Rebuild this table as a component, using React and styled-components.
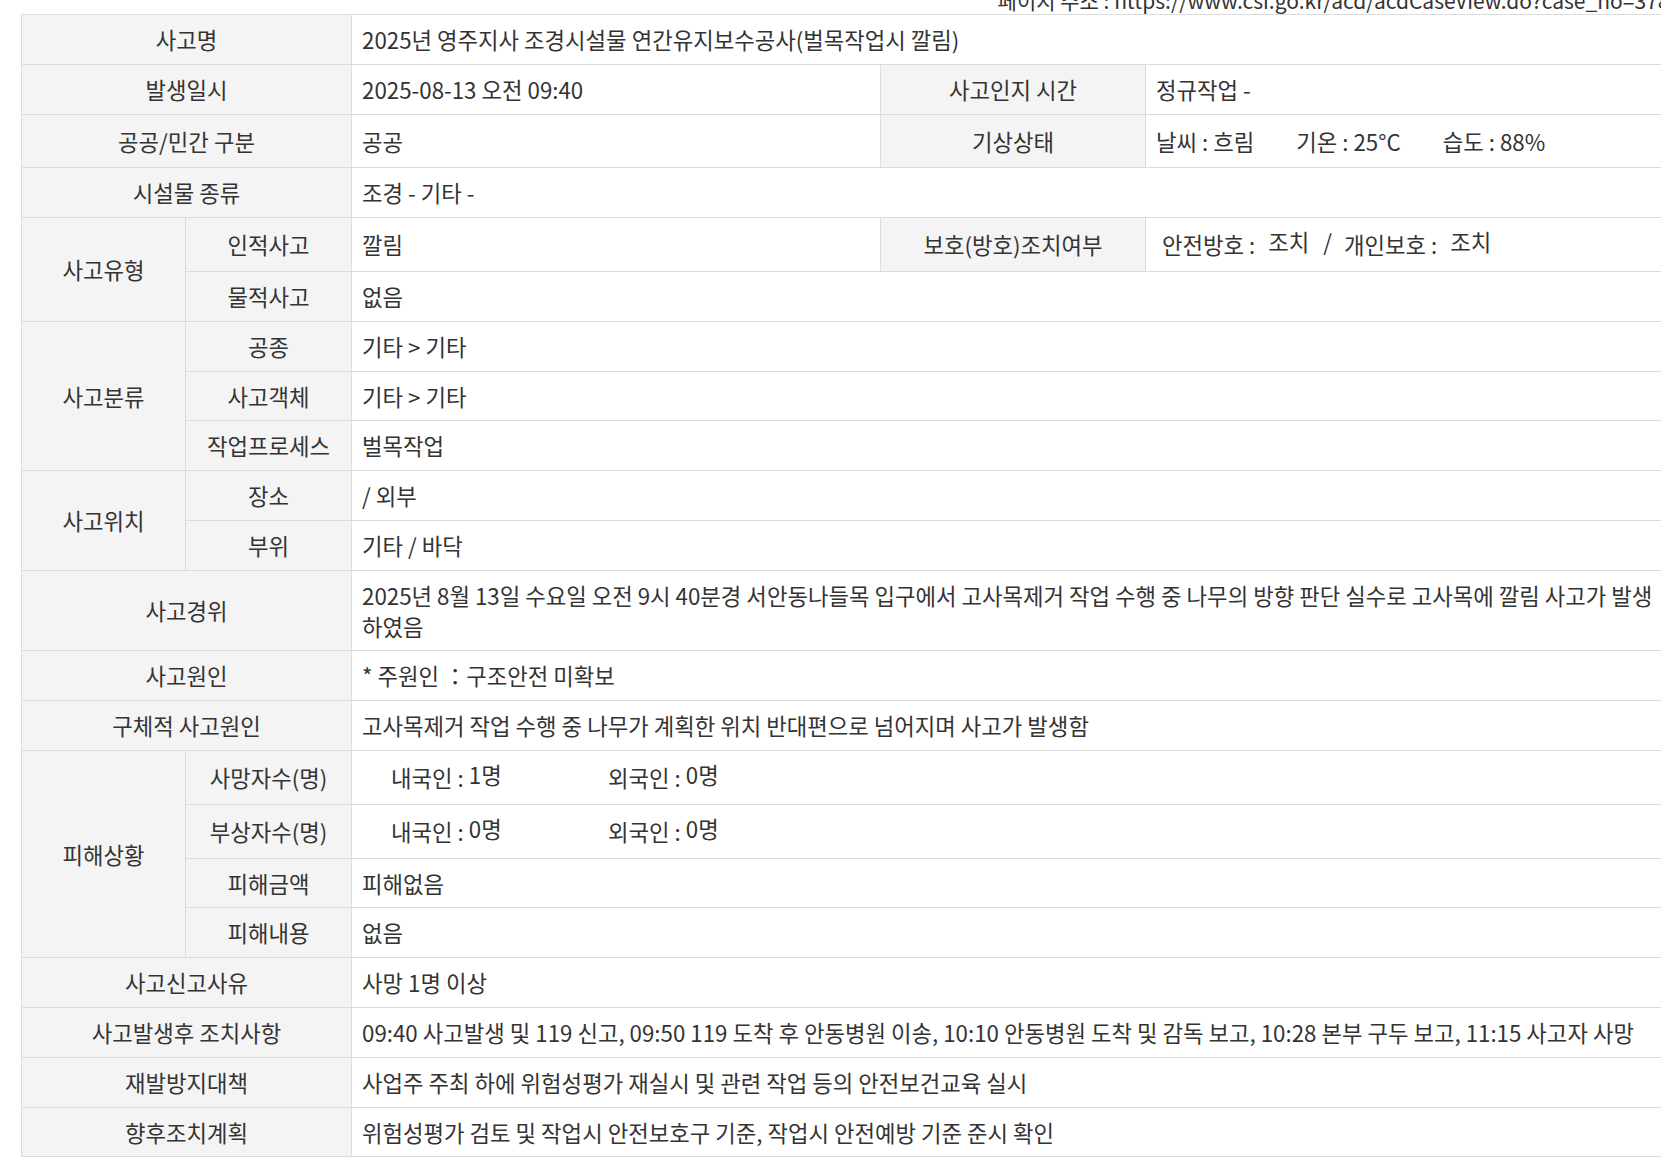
import React from 'react';
import styled, { createGlobalStyle } from 'styled-components';

const GlobalStyle = createGlobalStyle`
  html, body {
    margin: 0;
    padding: 0;
    background: #fff;
    overflow: hidden;
  }
  body {
    font-family: "Noto Sans CJK KR", "Noto Sans", sans-serif;
    color: #333;
  }
`;

const Page = styled.div`
  padding-left: 21px;
  width: 1650px;
`;

const AddressBar = styled.div`
  height: 14px;
  overflow: hidden;
  display: flex;
  justify-content: flex-end;
  align-items: flex-end;
`;

const Address = styled.div`
  font-size: 21px;
  line-height: 20px;
  margin-bottom: 4px;
  margin-right: -10px;
  white-space: nowrap;
`;

const Table = styled.table`
  width: 1650px;
  table-layout: fixed;
  border-collapse: collapse;
  font-size: 22.3px;
  line-height: 30.8px;
`;

const Th = styled.th`
  background: #f4f4f4;
  border: 1px solid #dcdcdc;
  font-weight: 400;
  text-align: center;
  padding: ${(p) => (p.$tall ? '11px' : '9px')} 10px;
  white-space: nowrap;
`;

const Td = styled.td`
  border: 1px solid #dcdcdc;
  padding: ${(p) => (p.$tall ? '11px' : '9px')} 10px;
  text-align: left;
  vertical-align: middle;
`;

const Weather = styled.div`
  display: flex;
  gap: 42px;
`;

const Guard = styled.div`
  display: flex;
  align-items: center;
  padding-left: 6px;
`;

const Raised = styled.span`
  position: relative;
  top: -3px;
  margin-left: ${(p) => p.$gap || 0}px;
`;

const Slash = styled.span`
  position: relative;
  top: -3px;
  margin: 0 12px 0 14px;
`;

const Count = styled.div`
  display: flex;
  padding-left: 29px;
`;

const CountItem = styled.span`
  width: 217px;
`;

const People = ({ local, foreign }) => (
  <Count>
    <CountItem>
      내국인 : <Raised>{local}명</Raised>
    </CountItem>
    <CountItem>
      외국인 : <Raised>{foreign}명</Raised>
    </CountItem>
  </Count>
);

const simpleRows = [
  ['사고신고사유', '사망 1명 이상'],
  [
    '사고발생후 조치사항',
    '09:40 사고발생 및 119 신고, 09:50 119 도착 후 안동병원 이송, 10:10 안동병원 도착 및 감독 보고, 10:28 본부 구두 보고, 11:15 사고자 사망',
  ],
  ['재발방지대책', '사업주 주최 하에 위험성평가 재실시 및 관련 작업 등의 안전보건교육 실시'],
  ['향후조치계획', '위험성평가 검토 및 작업시 안전보호구 기준, 작업시 안전예방 기준 준시 확인'],
];

const App = () => {
  return (
    <Page>
      <GlobalStyle />
      <AddressBar>
        <Address>페이지 주소 : https://www.csi.go.kr/acd/acdCaseView.do?case_no=3789</Address>
      </AddressBar>
      <Table>
        <colgroup>
          <col style={{ width: 164 }} />
          <col style={{ width: 166 }} />
          <col style={{ width: 529 }} />
          <col style={{ width: 265 }} />
          <col />
        </colgroup>
        <tbody>
          <tr>
            <Th colSpan={2}>사고명</Th>
            <Td colSpan={3}>2025년 영주지사 조경시설물 연간유지보수공사(벌목작업시 깔림)</Td>
          </tr>
          <tr>
            <Th colSpan={2}>발생일시</Th>
            <Td>2025-08-13 오전 09:40</Td>
            <Th>사고인지 시간</Th>
            <Td>정규작업 -</Td>
          </tr>
          <tr>
            <Th colSpan={2} $tall>
              공공/민간 구분
            </Th>
            <Td $tall>공공</Td>
            <Th $tall>기상상태</Th>
            <Td $tall>
              <Weather>
                <span>날씨 : 흐림</span>
                <span>기온 : 25°C</span>
                <span>습도 : 88%</span>
              </Weather>
            </Td>
          </tr>
          <tr>
            <Th colSpan={2}>시설물 종류</Th>
            <Td colSpan={3}>조경 - 기타 -</Td>
          </tr>
          <tr>
            <Th rowSpan={2}>사고유형</Th>
            <Th $tall>인적사고</Th>
            <Td $tall>깔림</Td>
            <Th $tall>보호(방호)조치여부</Th>
            <Td $tall>
              <Guard>
                <span>안전방호 :</span>
                <Raised $gap={13}>조치</Raised>
                <Slash>/</Slash>
                <span>개인보호 :</span>
                <Raised $gap={13}>조치</Raised>
              </Guard>
            </Td>
          </tr>
          <tr>
            <Th>물적사고</Th>
            <Td colSpan={3}>없음</Td>
          </tr>
          <tr>
            <Th rowSpan={3}>사고분류</Th>
            <Th>공종</Th>
            <Td colSpan={3}>기타 &gt; 기타</Td>
          </tr>
          <tr>
            <Th>사고객체</Th>
            <Td colSpan={3}>기타 &gt; 기타</Td>
          </tr>
          <tr>
            <Th>작업프로세스</Th>
            <Td colSpan={3}>벌목작업</Td>
          </tr>
          <tr>
            <Th rowSpan={2}>사고위치</Th>
            <Th>장소</Th>
            <Td colSpan={3}>/ 외부</Td>
          </tr>
          <tr>
            <Th>부위</Th>
            <Td colSpan={3}>기타 / 바닥</Td>
          </tr>
          <tr>
            <Th colSpan={2}>사고경위</Th>
            <Td colSpan={3}>
              2025년 8월 13일 수요일 오전 9시 40분경 서안동나들목 입구에서 고사목제거 작업 수행 중 나무의 방향
              판단 실수로 고사목에 깔림 사고가 발생하였음
            </Td>
          </tr>
          <tr>
            <Th colSpan={2}>사고원인</Th>
            <Td colSpan={3}>* 주원인 ：구조안전 미확보</Td>
          </tr>
          <tr>
            <Th colSpan={2}>구체적 사고원인</Th>
            <Td colSpan={3}>고사목제거 작업 수행 중 나무가 계획한 위치 반대편으로 넘어지며 사고가 발생함</Td>
          </tr>
          <tr>
            <Th rowSpan={4}>피해상황</Th>
            <Th $tall>사망자수(명)</Th>
            <Td colSpan={3} $tall>
              <People local={1} foreign={0} />
            </Td>
          </tr>
          <tr>
            <Th $tall>부상자수(명)</Th>
            <Td colSpan={3} $tall>
              <People local={0} foreign={0} />
            </Td>
          </tr>
          <tr>
            <Th>피해금액</Th>
            <Td colSpan={3}>피해없음</Td>
          </tr>
          <tr>
            <Th>피해내용</Th>
            <Td colSpan={3}>없음</Td>
          </tr>
          {simpleRows.map(([label, value]) => (
            <tr key={label}>
              <Th colSpan={2}>{label}</Th>
              <Td colSpan={3}>{value}</Td>
            </tr>
          ))}
        </tbody>
      </Table>
    </Page>
  );
};

export default App;
